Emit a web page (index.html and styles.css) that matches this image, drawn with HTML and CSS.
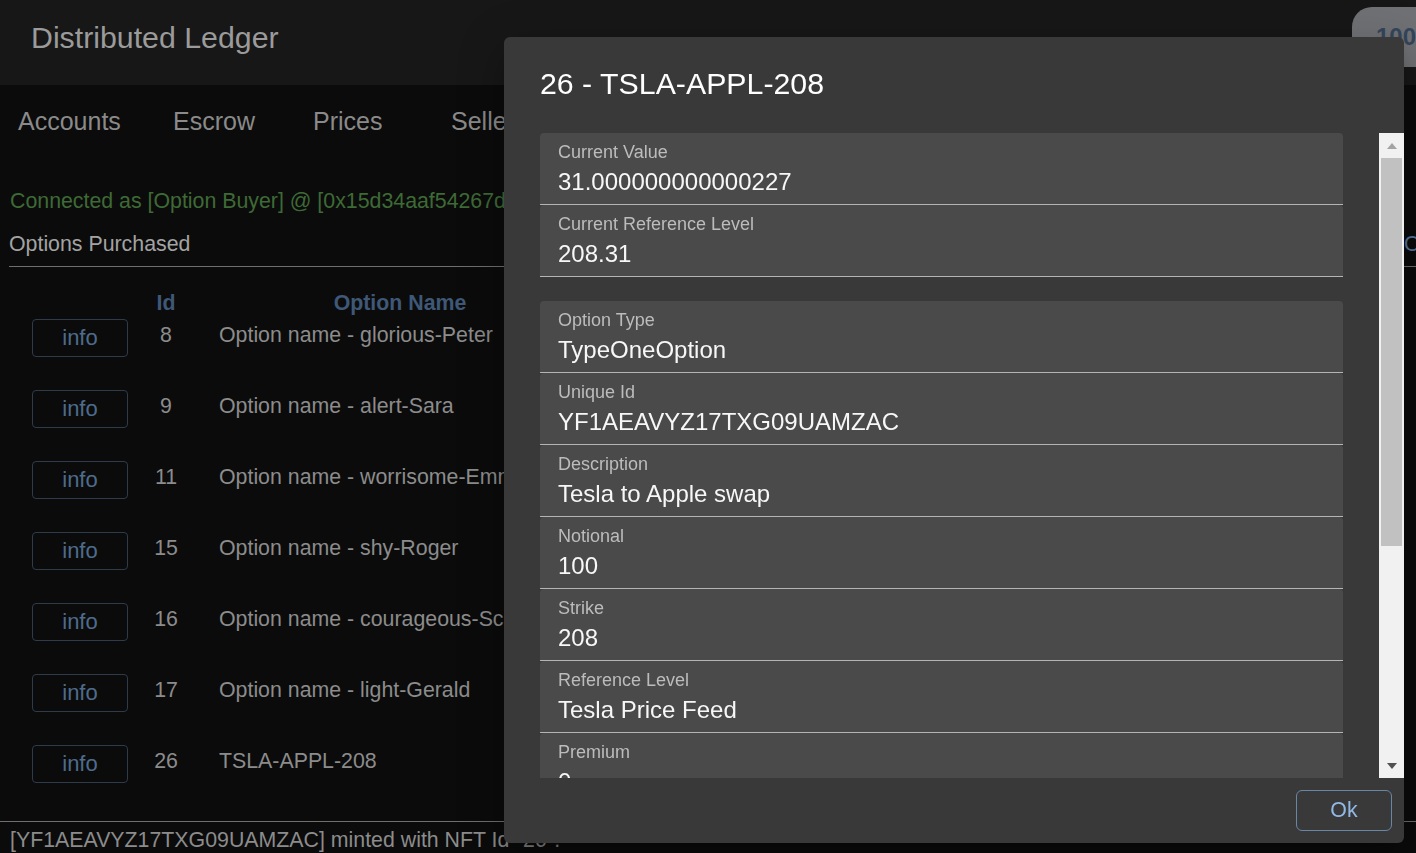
FILE: index.html
```html
<!DOCTYPE html>
<html lang="en">
<head>
<meta charset="utf-8">
<title>Distributed Ledger</title>
<link rel="stylesheet" href="styles.css">
</head>
<body>
<div class="app">
  <header class="appbar">
    <h1 class="brand">Distributed Ledger</h1>
    <div class="balance">100</div>
  </header>
  <nav class="tabs">
    <span class="tab">Accounts</span>
    <span class="tab">Escrow</span>
    <span class="tab">Prices</span>
    <span class="tab">Sellers</span>
    <span class="tab">Buyers</span>
  </nav>
  <main class="content">
    <p class="status">Connected as [Option Buyer] @ [0x15d34aaf54267db7d7c367839aaf71a00a2c6a65]</p>
    <div class="section-head">
      <h2 class="section-title">Options Purchased</h2>
      <span class="section-action">Options Sold</span>
    </div>
    <div class="table">
      <div class="trow thead">
        <span></span>
        <span class="c-id">Id</span>
        <span class="c-name">Option Name</span>
      </div>
      <div class="trow"><button class="info-btn">info</button><span class="c-id">8</span><span class="c-name">Option name - glorious-Peter</span></div>
      <div class="trow"><button class="info-btn">info</button><span class="c-id">9</span><span class="c-name">Option name - alert-Sara</span></div>
      <div class="trow"><button class="info-btn">info</button><span class="c-id">11</span><span class="c-name">Option name - worrisome-Emma</span></div>
      <div class="trow"><button class="info-btn">info</button><span class="c-id">15</span><span class="c-name">Option name - shy-Roger</span></div>
      <div class="trow"><button class="info-btn">info</button><span class="c-id">16</span><span class="c-name">Option name - courageous-Scott</span></div>
      <div class="trow"><button class="info-btn">info</button><span class="c-id">17</span><span class="c-name">Option name - light-Gerald</span></div>
      <div class="trow"><button class="info-btn">info</button><span class="c-id">26</span><span class="c-name">TSLA-APPL-208</span></div>
    </div>
    <div class="log">[YF1AEAVYZ17TXG09UAMZAC] minted with NFT Id "26".</div>
  </main>
</div>

<div class="dialog" role="dialog">
  <h2 class="dialog-title">26 - TSLA-APPL-208</h2>
  <div class="dialog-body">
    <div class="fields">
      <div class="group">
        <div class="field"><div class="label">Current Value</div><div class="value">31.000000000000227</div></div>
        <div class="field"><div class="label">Current Reference Level</div><div class="value">208.31</div></div>
      </div>
      <div class="group">
        <div class="field"><div class="label">Option Type</div><div class="value">TypeOneOption</div></div>
        <div class="field"><div class="label">Unique Id</div><div class="value">YF1AEAVYZ17TXG09UAMZAC</div></div>
        <div class="field"><div class="label">Description</div><div class="value">Tesla to Apple swap</div></div>
        <div class="field"><div class="label">Notional</div><div class="value">100</div></div>
        <div class="field"><div class="label">Strike</div><div class="value">208</div></div>
        <div class="field"><div class="label">Reference Level</div><div class="value">Tesla Price Feed</div></div>
        <div class="field"><div class="label">Premium</div><div class="value">0</div></div>
      </div>
    </div>
    <div class="scrollbar">
      <div class="sb-btn"><span class="arrow-up"></span></div>
      <div class="sb-thumb"></div>
      <div class="sb-track"></div>
      <div class="sb-btn"><span class="arrow-down"></span></div>
    </div>
  </div>
  <div class="dialog-actions">
    <button class="ok-btn">Ok</button>
  </div>
</div>
</body>
</html>
```

FILE: styles.css
```css
* {
  box-sizing: border-box;
}

html, body {
  margin: 0;
  padding: 0;
  height: 100%;
}

body {
  background: #0b0b0b;
  font-family: "Liberation Sans", Arial, sans-serif;
  overflow: hidden;
  color: #8c8c8c;
}

/* ---------- app bar ---------- */
.appbar {
  height: 85px;
  background: #171717;
  display: flex;
  justify-content: space-between;
  align-items: flex-start;
}

.brand {
  margin: 0;
  padding: 20px 0 0 31px;
  font-size: 30.3px;
  line-height: 36px;
  font-weight: normal;
  color: #9b9b9b;
}

.balance {
  margin-top: 7px;
  height: 60px;
  width: 64px;
  padding-left: 24px;
  background: #707174;
  border-radius: 20px 0 0 20px;
  font-size: 24px;
  line-height: 60px;
  font-weight: bold;
  color: #34465c;
  overflow: hidden;
  white-space: nowrap;
}

/* ---------- tabs ---------- */
.tabs {
  height: 75px;
  padding: 22px 0 0 18px;
  display: grid;
  grid-template-columns: 155px 140px 138px 140px 140px;
  font-size: 25px;
  line-height: 28px;
  color: #8a8a8a;
}

/* ---------- content ---------- */
.status {
  margin: 29px 0 0 10px;
  font-size: 21.33px;
  line-height: 24px;
  color: #3e6a36;
  white-space: nowrap;
}

.section-head {
  margin: 19px 0 0 9px;
  padding-bottom: 10px;
  border-bottom: 1px solid #6e6e6e;
  display: grid;
  grid-template-columns: 1395px auto;
  font-size: 21.33px;
  line-height: 24px;
  white-space: nowrap;
}

.section-title {
  margin: 0;
  font-size: inherit;
  font-weight: normal;
  color: #a3a3a3;
}

.section-action {
  color: #56749a;
}

.table {
  margin-top: 24px;
}

.trow {
  display: grid;
  grid-template-columns: 96px 76px 392px 1fr;
  padding-left: 32px;
  height: 71px;
  align-items: start;
  font-size: 21.33px;
  line-height: 24px;
  color: #8c8c8c;
}

.trow .c-id {
  text-align: center;
  padding-top: 4px;
}

.trow .c-name {
  padding: 4px 0 0 15px;
  white-space: nowrap;
}

.trow.thead {
  height: 28px;
  font-weight: bold;
  color: #3f5877;
}

.trow.thead .c-id,
.trow.thead .c-name {
  padding: 0;
  text-align: center;
}

.info-btn {
  width: 96px;
  height: 38px;
  padding: 0;
  background: transparent;
  border: 1px solid #2e3b4b;
  border-radius: 4px;
  font-family: inherit;
  font-size: 22px;
  line-height: 36px;
  color: #4e6b8b;
}

.log {
  margin-top: 5px;
  border-top: 1px solid #6e6e6e;
  padding: 6px 0 0 10px;
  font-size: 21.33px;
  line-height: 24px;
  color: #8c8c8c;
  white-space: nowrap;
}

/* ---------- dialog ---------- */
.dialog {
  position: fixed;
  left: 504px;
  top: 37px;
  width: 900px;
  height: 806px;
  background: #393939;
  border-radius: 6px;
  display: flex;
  flex-direction: column;
  box-shadow: 0 11px 15px -7px rgba(0, 0, 0, 0.2),
              0 24px 38px 3px rgba(0, 0, 0, 0.14),
              0 9px 46px 8px rgba(0, 0, 0, 0.12);
}

.dialog-title {
  margin: 0;
  padding: 28px 36px 30px;
  font-size: 30.3px;
  line-height: 38px;
  font-weight: normal;
  color: #ffffff;
}

.dialog-body {
  flex: 1;
  min-height: 0;
  display: flex;
}

.fields {
  flex: 1;
  padding: 0 36px;
  overflow: hidden;
}

.group {
  margin-bottom: 24px;
}

.field {
  height: 72px;
  padding: 9px 18px 0;
  background: #4a4a4a;
  border-radius: 4px 4px 0 0;
  border-bottom: 1px solid #b5b5b5;
}

.label {
  font-size: 18px;
  line-height: 20px;
  color: #bcbcbc;
}

.value {
  margin-top: 6px;
  font-size: 24px;
  line-height: 28px;
  color: #f7f7f7;
  white-space: nowrap;
}

/* fake classic scrollbar */
.scrollbar {
  width: 25px;
  background: #f1f1f1;
  display: flex;
  flex-direction: column;
}

.sb-btn {
  height: 25px;
  display: flex;
  align-items: center;
  justify-content: center;
}

.arrow-up {
  width: 0;
  height: 0;
  border-left: 5px solid transparent;
  border-right: 5px solid transparent;
  border-bottom: 6px solid #a3a3a3;
}

.arrow-down {
  width: 0;
  height: 0;
  border-left: 5px solid transparent;
  border-right: 5px solid transparent;
  border-top: 6px solid #505050;
}

.sb-thumb {
  height: 388px;
  margin: 0 2px;
  background: #c1c1c1;
}

.sb-track {
  flex: 1;
}

.dialog-actions {
  height: 65px;
  padding: 12px 12px 0;
  display: flex;
  justify-content: flex-end;
  align-items: flex-start;
}

.ok-btn {
  width: 96px;
  height: 41px;
  padding: 0;
  background: transparent;
  border: 1px solid #6a86a6;
  border-radius: 6px;
  font-family: inherit;
  font-size: 21.33px;
  line-height: 39px;
  color: #92b8e6;
}
```
